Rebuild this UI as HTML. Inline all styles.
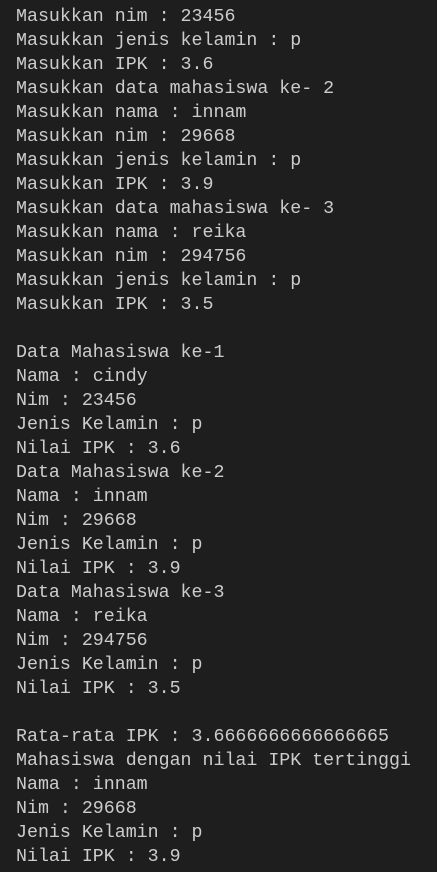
<!DOCTYPE html><html><head><style>
html,body{margin:0;background:#1e1e1e;width:437px;height:872px;overflow:hidden}
pre{margin:0;position:absolute;left:16px;top:5px;font-family:"Liberation Mono",monospace;font-size:18.3px;line-height:24px;color:#cccccc}
</style></head><body><pre>Masukkan nim : 23456
Masukkan jenis kelamin : p
Masukkan IPK : 3.6
Masukkan data mahasiswa ke- 2
Masukkan nama : innam
Masukkan nim : 29668
Masukkan jenis kelamin : p
Masukkan IPK : 3.9
Masukkan data mahasiswa ke- 3
Masukkan nama : reika
Masukkan nim : 294756
Masukkan jenis kelamin : p
Masukkan IPK : 3.5

Data Mahasiswa ke-1
Nama : cindy
Nim : 23456
Jenis Kelamin : p
Nilai IPK : 3.6
Data Mahasiswa ke-2
Nama : innam
Nim : 29668
Jenis Kelamin : p
Nilai IPK : 3.9
Data Mahasiswa ke-3
Nama : reika
Nim : 294756
Jenis Kelamin : p
Nilai IPK : 3.5

Rata-rata IPK : 3.6666666666666665
Mahasiswa dengan nilai IPK tertinggi
Nama : innam
Nim : 29668
Jenis Kelamin : p
Nilai IPK : 3.9</pre></body></html>
